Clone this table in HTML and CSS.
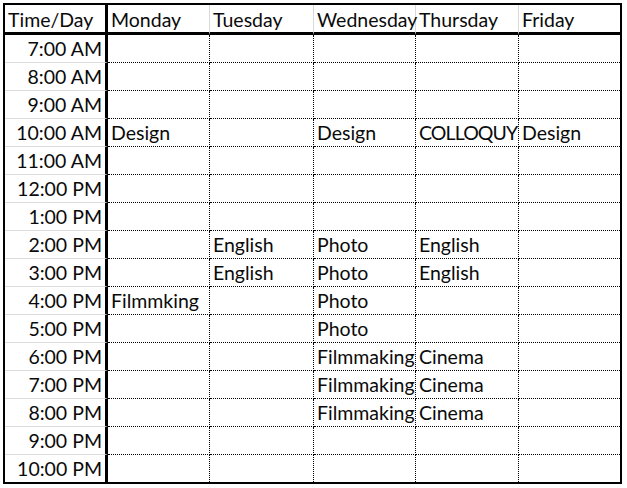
FILE: index.html
```html
<!DOCTYPE html>
<html>
<head>
<meta charset="utf-8">
<link rel="stylesheet" href="styles.css">
</head>
<body>
<div class="sheet">
  <div class="cell hd tm">Time/Day</div><div class="cell hd">Monday</div><div class="cell hd">Tuesday</div><div class="cell hd">Wednesday</div><div class="cell hd">Thursday</div><div class="cell hd lc">Friday</div>

  <div class="cell tm">7:00 AM</div><div class="cell"></div><div class="cell"></div><div class="cell"></div><div class="cell"></div><div class="cell lc"></div>
  <div class="cell tm">8:00 AM</div><div class="cell"></div><div class="cell"></div><div class="cell"></div><div class="cell"></div><div class="cell lc"></div>
  <div class="cell tm">9:00 AM</div><div class="cell"></div><div class="cell"></div><div class="cell"></div><div class="cell"></div><div class="cell lc"></div>
  <div class="cell tm">10:00 AM</div><div class="cell">Design</div><div class="cell"></div><div class="cell">Design</div><div class="cell caps">COLLOQUY</div><div class="cell lc">Design</div>
  <div class="cell tm">11:00 AM</div><div class="cell"></div><div class="cell"></div><div class="cell"></div><div class="cell"></div><div class="cell lc"></div>
  <div class="cell tm">12:00 PM</div><div class="cell"></div><div class="cell"></div><div class="cell"></div><div class="cell"></div><div class="cell lc"></div>
  <div class="cell tm">1:00 PM</div><div class="cell"></div><div class="cell"></div><div class="cell"></div><div class="cell"></div><div class="cell lc"></div>
  <div class="cell tm">2:00 PM</div><div class="cell"></div><div class="cell">English</div><div class="cell">Photo</div><div class="cell">English</div><div class="cell lc"></div>
  <div class="cell tm">3:00 PM</div><div class="cell"></div><div class="cell">English</div><div class="cell">Photo</div><div class="cell">English</div><div class="cell lc"></div>
  <div class="cell tm">4:00 PM</div><div class="cell">Filmmking</div><div class="cell"></div><div class="cell">Photo</div><div class="cell"></div><div class="cell lc"></div>
  <div class="cell tm">5:00 PM</div><div class="cell"></div><div class="cell"></div><div class="cell">Photo</div><div class="cell"></div><div class="cell lc"></div>
  <div class="cell tm">6:00 PM</div><div class="cell"></div><div class="cell"></div><div class="cell">Filmmaking</div><div class="cell">Cinema</div><div class="cell lc"></div>
  <div class="cell tm">7:00 PM</div><div class="cell"></div><div class="cell"></div><div class="cell">Filmmaking</div><div class="cell">Cinema</div><div class="cell lc"></div>
  <div class="cell tm">8:00 PM</div><div class="cell"></div><div class="cell"></div><div class="cell">Filmmaking</div><div class="cell">Cinema</div><div class="cell lc"></div>
  <div class="cell tm">9:00 PM</div><div class="cell"></div><div class="cell"></div><div class="cell"></div><div class="cell"></div><div class="cell lc"></div>
  <div class="cell tm lr">10:00 PM</div><div class="cell lr"></div><div class="cell lr"></div><div class="cell lr"></div><div class="cell lr"></div><div class="cell lc lr"></div>
</div>
</body>
</html>
```

FILE: styles.css
```css
html, body {
  margin: 0;
  padding: 0;
  background: #ffffff;
}

.sheet {
  display: grid;
  grid-template-columns: 103px 102px 104px 102px 103px 101px;
  grid-template-rows: 30px repeat(15, 28px) 27px;
  width: max-content;
  margin: 3px 0 0 3px;
  border: 2px solid #000;
}

.cell {
  box-sizing: border-box;
  font-family: Lato, "Open Sans", sans-serif;
  font-size: 19.5px;
  line-height: 24px;
  color: #0a0a0a;
  white-space: nowrap;
  padding: 2px 3px 0 3px;
  border-right: 1px dotted #000;
  border-bottom: 1px dotted #000;
  overflow: visible;
  min-width: 0;
}

.hd {
  border-right: 1px solid #d9d9d9;
  border-bottom: 3px solid #000;
  padding-top: 3px;
}

.tm {
  text-align: right;
  border-right: 3px solid #000;
  border-bottom: 1px solid #dcdcdc;
}

.hd.tm {
  text-align: left;
  border-right: 3px solid #000;
  border-bottom: 3px solid #000;
}

.caps {
  letter-spacing: -0.9px;
}

.lc {
  border-right: none;
}

.lr {
  border-bottom: none;
}
```
